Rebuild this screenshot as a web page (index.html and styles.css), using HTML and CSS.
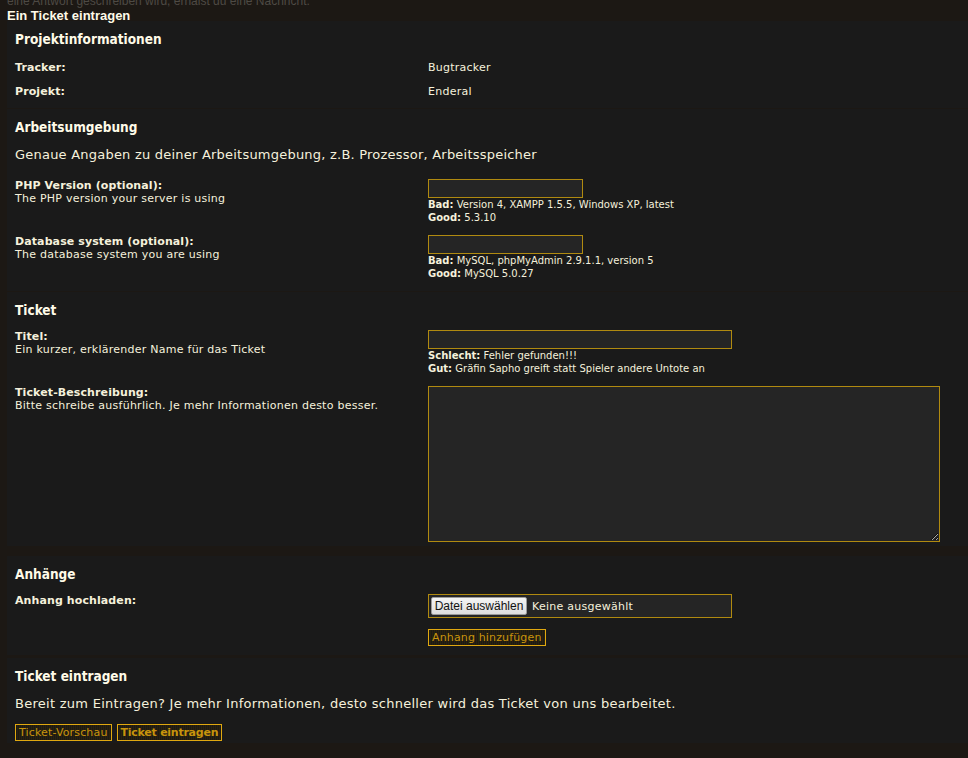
FILE: index.html
```html
<!DOCTYPE html>
<html lang="de">

<head>
  <meta charset="UTF-8">
  <meta name="viewport" content="width=device-width, initial-scale=1.0">
  <title>Ein Ticket eintragen</title>
  <link rel="stylesheet" href="styles.css">
</head>

<body>
  <p class="intro-tail">eine Antwort geschreiben wird, erhälst du eine Nachricht.</p>
  <h2 class="page-title">Ein Ticket eintragen</h2>

  <form class="ticket-form" onsubmit="return false">
    <div class="box-group">
      <!-- Projekt -->
      <section class="box">
        <h3>Projektinformationen</h3>
        <div class="info-list">
          <div class="row info-row">
            <span class="label">Tracker:</span>
            <span>Bugtracker</span>
          </div>
          <div class="row info-row">
            <span class="label">Projekt:</span>
            <span>Enderal</span>
          </div>
        </div>
      </section>

      <!-- Arbeitsumgebung -->
      <section class="box env">
        <h3>Arbeitsumgebung</h3>
        <p class="lead">Genaue Angaben zu deiner Arbeitsumgebung, z.B. Prozessor, Arbeitsspeicher</p>
        <div class="row field-row">
          <div>
            <span class="label">PHP Version (optional):</span>
            <span class="desc">The PHP version your server is using</span>
          </div>
          <div>
            <input type="text" class="text-input short">
            <p class="hint"><b>Bad:</b> Version 4, XAMPP 1.5.5, Windows XP, latest</p>
            <p class="hint"><b>Good:</b> 5.3.10</p>
          </div>
        </div>
        <div class="row field-row">
          <div>
            <span class="label">Database system (optional):</span>
            <span class="desc">The database system you are using</span>
          </div>
          <div>
            <input type="text" class="text-input short">
            <p class="hint"><b>Bad:</b> MySQL, phpMyAdmin 2.9.1.1, version 5</p>
            <p class="hint"><b>Good:</b> MySQL 5.0.27</p>
          </div>
        </div>
      </section>

      <!-- Ticket -->
      <section class="box ticket">
        <h3>Ticket</h3>
        <div class="row field-row">
          <div>
            <span class="label">Titel:</span>
            <span class="desc">Ein kurzer, erklärender Name für das Ticket</span>
          </div>
          <div>
            <input type="text" class="text-input">
            <p class="hint"><b>Schlecht:</b> Fehler gefunden!!!</p>
            <p class="hint"><b>Gut:</b> Gräfin Sapho greift statt Spieler andere Untote an</p>
          </div>
        </div>
        <div class="row field-row">
          <div>
            <span class="label">Ticket-Beschreibung:</span>
            <span class="desc">Bitte schreibe ausführlich. Je mehr Informationen desto besser.</span>
          </div>
          <div>
            <textarea class="text-area"></textarea>
          </div>
        </div>
      </section>
    </div>

    <!-- Anhänge -->
    <section class="box attach">
      <h3>Anhänge</h3>
      <div class="row field-row">
        <div>
          <span class="label">Anhang hochladen:</span>
        </div>
        <div>
          <label class="file-box">
            <span class="file-btn">Datei auswählen</span>
            <span class="file-name">Keine ausgewählt</span>
          </label>
          <button class="btn">Anhang hinzufügen</button>
        </div>
      </div>
    </section>

    <!-- Absenden -->
    <section class="box submit">
      <h3>Ticket eintragen</h3>
      <p class="lead">Bereit zum Eintragen? Je mehr Informationen, desto schneller wird das Ticket von uns bearbeitet.</p>
      <div class="actions">
        <button class="btn">Ticket-Vorschau</button>
        <button class="btn btn-strong">Ticket eintragen</button>
      </div>
    </section>
  </form>
</body>

</html>
```

FILE: styles.css
```css
* {
  box-sizing: border-box;
  padding: 0;
  margin: 0;
}

html,
body {
  width: 100%;
  height: 100%;
}

body {
  background-color: #1c1814;
  color: #f5f1dc;
  font-family: "DejaVu Sans", Verdana, sans-serif;
  font-size: 11px;
  letter-spacing: 0.25px;
  padding-left: 7px;
  overflow: hidden;
}

.intro-tail {
  margin-top: -6px;
  font-family: "Liberation Sans", Arial, sans-serif;
  font-size: 12px;
  line-height: 14px;
  letter-spacing: 0;
  color: #4e4a44;
}

.page-title {
  height: 13px;
  padding-top: 3px;
  line-height: 10px;
  font-family: "Liberation Sans", Arial, sans-serif;
  font-size: 13px;
  font-weight: bold;
  letter-spacing: 0;
  color: #fffbe8;
}

.box-group {
  margin-bottom: 10px;
}

.box-group .box + .box {
  border-top: 1px solid #1c1814;
}

.box {
  background-color: #1a1a1a;
  padding: 10px 0 11px 8px;
}

.box h3 {
  font-family: "DejaVu Sans Condensed", "DejaVu Sans", sans-serif;
  font-stretch: condensed;
  font-size: 13.5px;
  font-weight: bold;
  line-height: 17px;
  letter-spacing: 0;
  margin-bottom: 11px;
  color: #fffbe8;
}

.lead {
  font-size: 13px;
  line-height: 15px;
  letter-spacing: 0.22px;
}

.submit .lead {
  letter-spacing: 0.27px;
}

.row {
  display: grid;
  grid-template-columns: 413px 1fr;
}

.label {
  display: block;
  font-weight: bold;
  line-height: 13px;
  letter-spacing: 0.1px;
}

.desc {
  display: block;
  line-height: 13px;
}

/* Projektinformationen */
.info-list {
  padding-top: 2px;
}

.info-row {
  line-height: 13px;
  margin-bottom: 11px;
}

.info-row:last-child {
  margin-bottom: 0;
}

.box:first-child {
  padding-bottom: 10px;
}

/* Felder */
.env .lead {
  margin-bottom: 17px;
}

.field-row {
  margin-bottom: 11px;
}

.field-row:last-child {
  margin-bottom: 0;
}

.text-input {
  display: block;
  width: 304px;
  height: 19px;
  background-color: #252525;
  border: 1px solid #b08a10;
  color: #f5f1dc;
  outline: none;
}

.text-input.short {
  width: 155px;
}

.hint {
  font-size: 10px;
  line-height: 13px;
  letter-spacing: 0;
}

.ticket {
  padding-bottom: 4px;
}

.text-area {
  display: block;
  width: 512px;
  height: 156px;
  background-color: #252525;
  border: 1px solid #b08a10;
  color: #f5f1dc;
  outline: none;
}

/* Anhänge */
.attach {
  padding-bottom: 9px;
  margin-bottom: 3px;
}

.file-box {
  display: flex;
  align-items: center;
  width: 304px;
  height: 24px;
  padding: 0 2px;
  background-color: #252525;
  border: 1px solid #b08a10;
  margin-bottom: 11px;
}

.file-btn {
  display: inline-block;
  width: 96px;
  height: 18px;
  line-height: 16px;
  text-align: center;
  font-family: "Liberation Sans", Arial, sans-serif;
  font-size: 12px;
  letter-spacing: 0;
  color: #111;
  background: linear-gradient(#f4f4f4, #dedede);
  border: 1px solid #9a9a9a;
  border-radius: 2px;
}

.file-name {
  margin-left: 5px;
  font-size: 11px;
}

.btn {
  display: inline-block;
  height: 17px;
  padding: 0 3px;
  font-family: "DejaVu Sans", Verdana, sans-serif;
  font-size: 11px;
  line-height: 15px;
  letter-spacing: 0.15px;
  color: #c8940c;
  border: 1px solid #e0a810;
  background: repeating-linear-gradient(90deg, #1c1a14 0, #1c1a14 1px, #2a2210 1px, #2a2210 2px);
  cursor: pointer;
}

.btn:hover {
  color: #f0b820;
}

.btn-strong {
  font-weight: bold;
  letter-spacing: -0.25px;
}

/* Absenden */
.submit {
  padding-bottom: 2px;
}

.submit .lead {
  margin-bottom: 13px;
}

.actions {
  display: flex;
  gap: 5px;
}
```
